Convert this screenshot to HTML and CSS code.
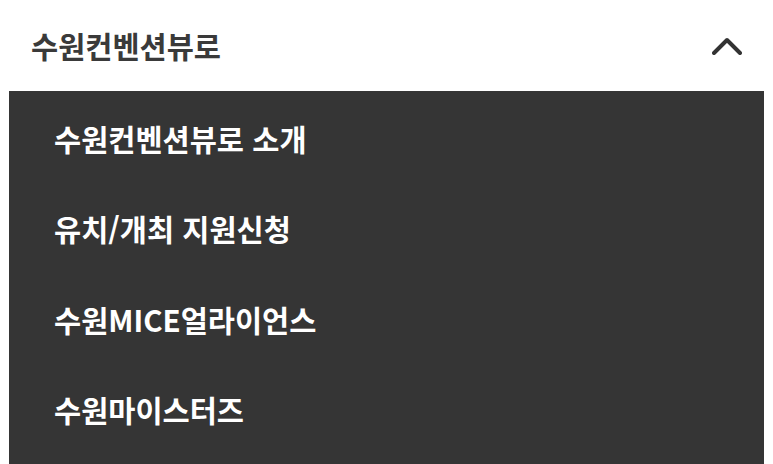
FILE: index.html
```html
<!DOCTYPE html>
<html lang="ko">
<head>
<meta charset="utf-8">
<link rel="stylesheet" href="styles.css">
</head>
<body>
<div class="accordion">
  <div class="head">
    <span class="title">수원컨벤션뷰로</span>
    <svg class="chev" width="30" height="18" viewBox="0 0 30 18"><path d="M2 16 L15 3 L28 16" fill="none" stroke="#333" stroke-width="4" stroke-linecap="round" stroke-linejoin="round"/></svg>
  </div>
  <ul class="menu">
    <li class="item">수원컨벤션뷰로 소개</li>
    <li class="item">유치/개최 지원신청</li>
    <li class="item">수원MICE얼라이언스</li>
    <li class="item">수원마이스터즈</li>
  </ul>
</div>
</body>
</html>
```
FILE: styles.css
```css
html, body {
  margin: 0;
  padding: 0;
  background: #ffffff;
  font-family: "Noto Sans CJK KR", "Noto Sans", sans-serif;
}
.accordion {
  width: 773px;
  height: 464px;
  overflow: hidden;
}
.head {
  height: 91px;
  display: flex;
  align-items: center;
  justify-content: space-between;
  padding: 0 31px 0 31px;
  box-sizing: border-box;
}
.title {
  font-size: 29.5px;
  font-weight: 700;
  color: #3a3a3a;
  line-height: 1;
}
.chev {
  display: block;
}
.menu {
  list-style: none;
  margin: 0 9px;
  padding: 2px 0 0 45px;
  background: #353535;
  height: 373px;
  box-sizing: border-box;
}
.item {
  height: 90.5px;
  display: flex;
  align-items: center;
  color: #ffffff;
  font-size: 29.5px;
  font-weight: 700;
  line-height: 1;
}
```
